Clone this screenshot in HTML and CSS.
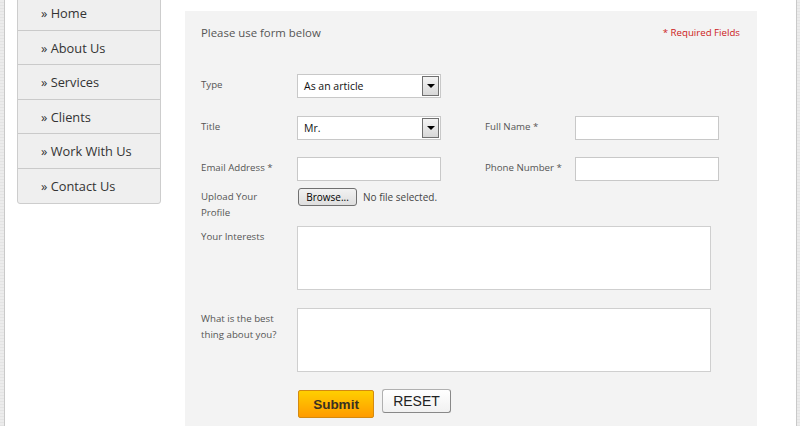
FILE: index.html
```html
<!DOCTYPE html>
<html>
<head>
<meta charset="utf-8">
<link rel="stylesheet" href="styles.css">
</head>
<body>
<div class="page">
  <ul class="sidebar">
    <li class="nav-item">» Home</li>
    <li class="nav-item">» About Us</li>
    <li class="nav-item">» Services</li>
    <li class="nav-item">» Clients</li>
    <li class="nav-item">» Work With Us</li>
    <li class="nav-item last">» Contact Us</li>
  </ul>
  <div class="panel">
    <div class="panel-head">
      <span class="intro">Please use form below</span>
      <span class="required">* Required Fields</span>
    </div>
    <div class="form">
      <div class="row r-type">
        <label class="lbl">Type</label>
        <div class="select"><span class="sel-text">As an article</span><span class="sel-btn"><span class="tri"></span></span></div>
      </div>
      <div class="row r-title">
        <label class="lbl">Title</label>
        <div class="select"><span class="sel-text">Mr.</span><span class="sel-btn"><span class="tri"></span></span></div>
        <label class="lbl lbl2">Full Name *</label>
        <div class="input"></div>
      </div>
      <div class="row r-email">
        <label class="lbl">Email Address *</label>
        <div class="input"></div>
        <label class="lbl lbl2">Phone Number *</label>
        <div class="input"></div>
      </div>
      <div class="row r-upload">
        <label class="lbl lbl-flush">Upload Your Profile</label>
        <div class="file"><span class="browse">Browse...</span><span class="nofile">No file selected.</span></div>
      </div>
      <div class="row r-interests">
        <label class="lbl">Your Interests</label>
        <div class="textarea"></div>
      </div>
      <div class="row r-best">
        <label class="lbl">What is the best thing about you?</label>
        <div class="textarea"></div>
      </div>
      <div class="row r-buttons">
        <span class="lbl"></span>
        <div class="buttons">
          <span class="btn-submit">Submit</span>
          <span class="btn-reset">RESET</span>
        </div>
      </div>
    </div>
  </div>
</div>
</body>
</html>
```
FILE: styles.css
```css
html, body {
  margin: 0;
  padding: 0;
}
body {
  background: repeating-linear-gradient(0deg, #e4e4e4 0 1px, #ececec 1px 3px);
  font-family: "Open Sans", "Noto Sans", sans-serif;
  height: 426px;
  overflow: hidden;
}
.page {
  margin: 0 3px 0 4px;
  height: 426px;
  background: #fff;
  border-left: 1px solid #c9c9c9;
  border-right: 1px solid #c9c9c9;
  display: flex;
  align-items: flex-start;
}
.sidebar {
  list-style: none;
  margin: -5px 0 0 12px;
  padding: 0;
  width: 142px;
  background: #efefef;
  border: 1px solid #cdcdcd;
  border-radius: 0 0 3px 3px;
  flex: none;
}
.nav-item {
  height: 33.6px;
  line-height: 35px;
  padding-left: 23px;
  font-size: 12.8px;
  color: #333;
  border-bottom: 1px solid #cacaca;
  white-space: nowrap;
  overflow: hidden;
}
.nav-item.last {
  border-bottom: none;
}
.panel {
  margin: 11px 0 0 24px;
  width: 540px;
  height: 420px;
  padding: 13px 16px 0 16px;
  background: #f3f3f3;
  flex: none;
}
.panel-head {
  display: flex;
  justify-content: space-between;
  align-items: center;
  height: 16px;
  padding-right: 1px;
}
.intro {
  font-size: 11.4px;
  color: #555;
}
.required {
  font-size: 9.7px;
  color: #cc1a1a;
}
.form {
  margin-top: 34px;
}
.row {
  display: flex;
  align-items: flex-start;
}
.lbl {
  width: 96px;
  flex: none;
  padding-top: 3px;
  font-size: 9.7px;
  line-height: 16px;
  color: #555;
}
.lbl2 {
  width: 90px;
  margin-left: 44px;
}
.lbl-flush {
  padding-top: 1px;
  width: 66px;
  margin-right: 30px;
}
.r-type { margin-bottom: 18px; }
.r-title { margin-bottom: 17px; }
.r-email { margin-bottom: 7px; }
.r-upload { height: 32px; margin-bottom: 6px; }
.r-interests { margin-bottom: 18px; }
.r-best { margin-bottom: 17px; }
.r-best .lbl { width: 86px; margin-right: 10px; }

.select {
  width: 142px;
  height: 22px;
  border: 1px solid #c8c8c8;
  background: #fff;
  display: flex;
  align-items: center;
  justify-content: space-between;
  flex: none;
}
.sel-text {
  padding-left: 6px;
  font-size: 10.5px;
  color: #111;
}
.sel-btn {
  width: 15px;
  height: 18px;
  margin-right: 1px;
  border: 1px solid #707070;
  background: linear-gradient(#f4f4f4, #d8d8d8);
  display: flex;
  align-items: center;
  justify-content: center;
}
.tri {
  width: 0;
  height: 0;
  border-left: 4px solid transparent;
  border-right: 4px solid transparent;
  border-top: 4px solid #000;
}
.input {
  width: 142px;
  height: 22px;
  border: 1px solid #c8c8c8;
  background: #fff;
  flex: none;
}
.file {
  display: flex;
  align-items: center;
  gap: 6px;
}
.browse {
  margin-left: 1px;
  width: 57px;
  height: 16px;
  border: 1px solid #707070;
  border-radius: 3px;
  background: linear-gradient(#f2f2f2, #dedede);
  font-size: 10px;
  line-height: 16px;
  text-align: center;
  color: #000;
}
.nofile {
  font-size: 10px;
  color: #444;
}
.textarea {
  width: 412px;
  height: 62px;
  border: 1px solid #cfcfcf;
  background: #fff;
  flex: none;
}
.buttons {
  display: flex;
  align-items: flex-start;
  gap: 8px;
}
.btn-submit {
  margin-top: 1px;
  margin-left: 1px;
  width: 74px;
  height: 26px;
  border: 1px solid #d48a10;
  border-radius: 2px;
  background: linear-gradient(#ffcf00, #ff9b00);
  font-family: "Liberation Sans", Arial, sans-serif;
  font-weight: bold;
  font-size: 13.5px;
  line-height: 28px;
  text-align: center;
  color: #3a3020;
}
.btn-reset {
  width: 67px;
  height: 22px;
  border: 1px solid #b0b0b0;
  border-right-color: #888;
  border-bottom-color: #888;
  border-radius: 3px;
  background: linear-gradient(#ffffff, #f1f1f1);
  font-family: "Liberation Sans", Arial, sans-serif;
  font-size: 14px;
  line-height: 22px;
  text-align: center;
  color: #222;
}
```
